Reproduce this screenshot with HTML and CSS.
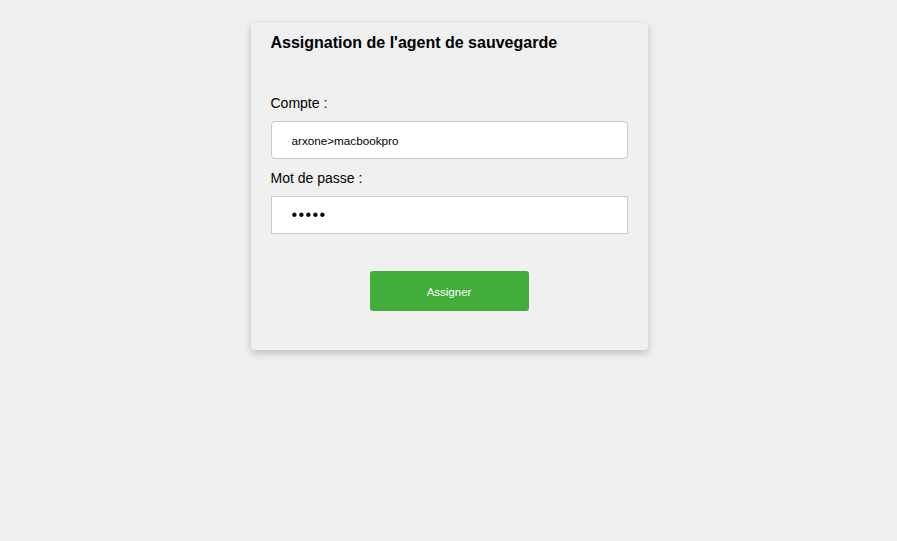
FILE: index.html
```html
<!DOCTYPE html>
<html lang="fr">
<head>
<meta charset="utf-8">
<title>Assignation de l'agent de sauvegarde</title>
<link rel="stylesheet" href="styles.css">
</head>
<body>
<div class="card">
  <h3 class="card-title">Assignation de l'agent de sauvegarde</h3>
  <form class="form">
    <label class="label" for="account">Compte :</label>
    <input class="field field-rounded" id="account" type="text" value="arxone&gt;macbookpro">
    <label class="label label-second" for="password">Mot de passe :</label>
    <input class="field field-password" id="password" type="password" value="12345">
    <div class="actions">
      <button class="btn" type="button">Assigner</button>
    </div>
  </form>
</div>
</body>
</html>
```
FILE: styles.css
```css
html, body {
  margin: 0;
  padding: 0;
  background: #f0f0f0;
}
body {
  font-family: "Liberation Sans", Arial, sans-serif;
  color: #000;
  padding-top: 23px;
  padding-left: 1px;
  min-height: 100vh;
  box-sizing: border-box;
}
.card {
  width: 397px;
  box-sizing: border-box;
  margin: 0 auto;
  background: #f0f0f0;
  border-radius: 4px;
  box-shadow: 0 3px 8px rgba(0, 0, 0, 0.22);
  padding: 11px 20px 39px 20px;
}
.card-title {
  margin: 0;
  font-size: 16px;
  font-weight: bold;
  line-height: 18px;
}
.form {
  display: flex;
  flex-direction: column;
  margin-top: 43px;
}
.label {
  font-size: 14px;
  line-height: 16px;
  margin-bottom: 10px;
}
.label-second {
  margin-top: 11px;
}
.field {
  box-sizing: border-box;
  width: 357px;
  height: 38px;
  margin: 0;
  border: 1px solid #c9c9c9;
  background: #fff;
  padding: 0 20px;
  font-family: "Liberation Sans", Arial, sans-serif;
  font-size: 11.7px;
  color: #000;
  outline: none;
}
.field-rounded {
  border-radius: 4px;
}
.field-password {
  border-radius: 0;
  font-size: 16px;
  letter-spacing: 1.4px;
}
.actions {
  display: flex;
  justify-content: center;
  margin-top: 37px;
}
.btn {
  width: 159px;
  height: 40px;
  border: none;
  border-radius: 3px;
  background: #42ad3b;
  color: #fff;
  font-family: "Liberation Sans", Arial, sans-serif;
  font-size: 11.5px;
  padding: 1px 0 0 0;
  cursor: pointer;
}
```
